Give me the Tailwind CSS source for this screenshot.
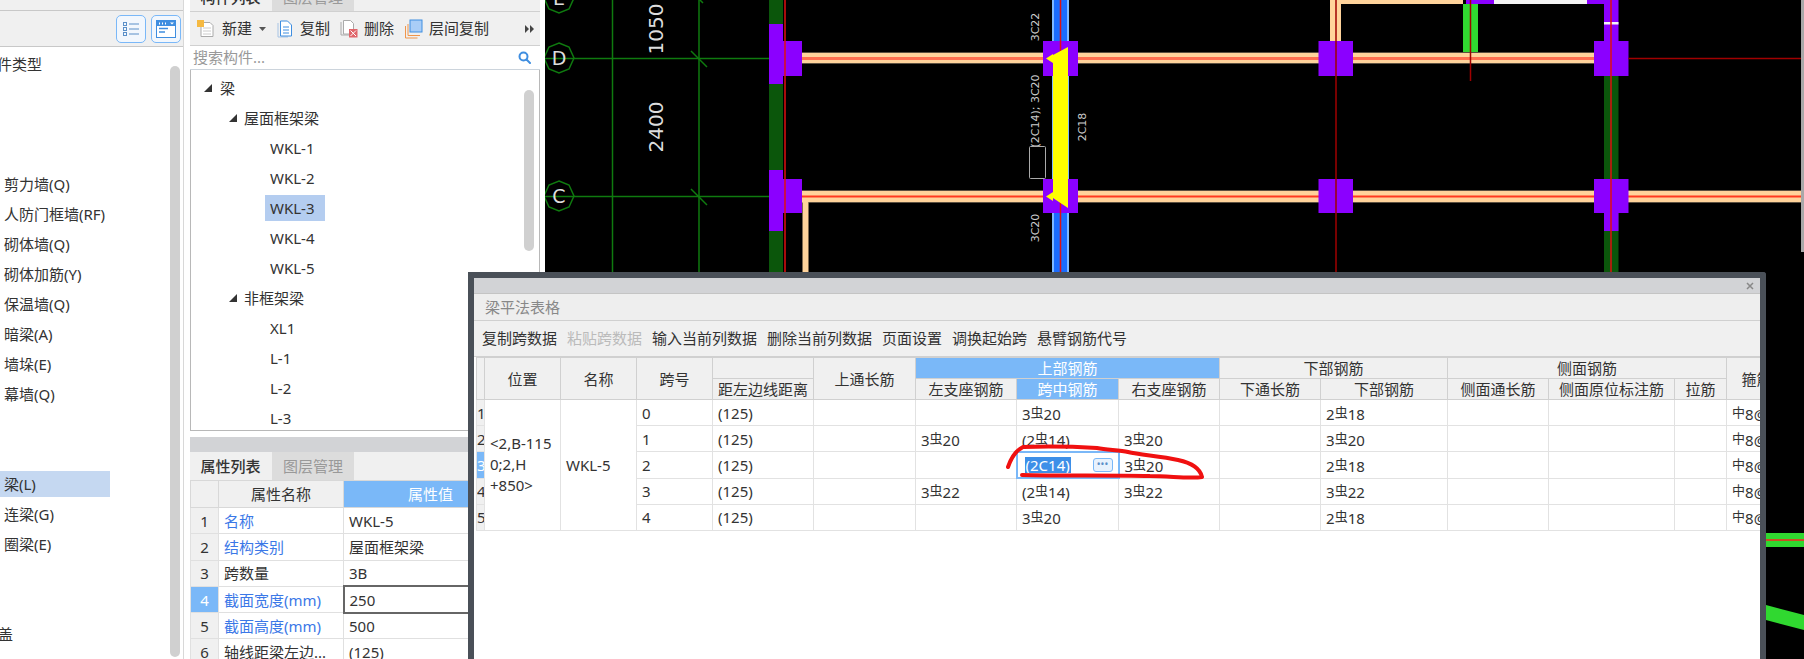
<!DOCTYPE html>
<html lang="zh-CN">
<head>
    <meta charset="UTF-8">
    <title>梁平法表格</title>
    <script src="https://cdn.jsdelivr.net/npm/@tailwindcss/browser@4"></script>
</head>
<body class="relative w-[1804px] h-[659px] overflow-hidden bg-white text-[15px] text-[#333] font-['Noto_Sans','Noto_Sans_CJK_SC',sans-serif]">

<div class="flex h-[659px]">
    <!-- Component type panel -->
    <div class="relative w-[190px] shrink-0 overflow-hidden">
        <div class="w-[184px] h-[10px] bg-[#f0f0f0]"></div>
        <div class="w-[184px] h-[37px] bg-[#f0f0f0] border-y border-[#c8c8c8] flex items-center justify-end gap-[5px] pr-[3px]">
            <div class="w-[30px] h-[28px] rounded-[5px] border border-[#7ab8f8] bg-[#f2f7fd] flex items-center justify-center">
                <svg width="18" height="16" viewBox="0 0 18 16" fill="none" stroke="#5a8fc8"><rect x="1.500" y="1.500" width="3" height="3"/><rect x="1.500" y="6.500" width="3" height="3"/><rect x="1.500" y="11.500" width="3" height="3"/><path d="M7 3h10M7 8h10M7 13h10"/></svg>
            </div>
            <div class="w-[30px] h-[28px] rounded-[5px] border border-[#7ab8f8] bg-[#f2f7fd] flex items-center justify-center">
                <svg width="20" height="18" viewBox="0 0 20 18"><rect width="20" height="18" fill="#3f8ee0"/><rect x="1" y="6" width="18" height="11" fill="#fff"/><path d="M3 2.500h1v2H3zM6 2.500h1v2H6zM9 2.500h1v2H9zM14 2.500h4l-2 2z" fill="#fff"/><path d="M3 8.500h9M3 12h6" stroke="#3f8ee0" stroke-width="1.500"/></svg>
            </div>
        </div>
        <div class="w-[170px] pt-[2px] pl-[4px] leading-[30px] whitespace-nowrap">
            <div class="h-[30px] ml-[-22px]">构件类型</div>
            <div class="h-[90px]"></div>
            <div class="h-[30px]">剪力墙(Q)</div>
            <div class="h-[30px]">人防门框墙(RF)</div>
            <div class="h-[30px]">砌体墙(Q)</div>
            <div class="h-[30px]">砌体加筋(Y)</div>
            <div class="h-[30px]">保温墙(Q)</div>
            <div class="h-[30px]">暗梁(A)</div>
            <div class="h-[30px]">墙垛(E)</div>
            <div class="h-[30px]">幕墙(Q)</div>
            <div class="h-[60px]"></div>
            <div class="h-[30px] flex items-center ml-[-4px]"><span class="w-[110px] h-[26px] leading-[26px] pl-[4px] bg-[#c5d8f1]">梁(L)</span></div>
            <div class="h-[30px]">连梁(G)</div>
            <div class="h-[30px]">圈梁(E)</div>
            <div class="h-[60px]"></div>
            <div class="h-[30px] ml-[-21px]">顶盖</div>
        </div>
        <div class="absolute left-[170px] top-[66px] w-[10px] h-[591px] rounded-[5px] bg-[#d0d0d0]"></div>
        <div class="absolute left-[183px] top-0 w-px h-[659px] bg-[#d8d8d8]"></div>
    </div>

    <!-- Component list and properties -->
    <div class="w-[350px] shrink-0 flex flex-col overflow-hidden">
        <div class="flex h-[28px] mt-[-17px] shrink-0 bg-[#f0f0f0] leading-[28px] text-center">
            <div class="w-[81px] font-medium">构件列表</div>
            <div class="w-[82px] ml-px bg-[#dcdcdc] text-[#999]">图层管理</div>
        </div>
        <div class="h-[35px] shrink-0 bg-[#f0f0f0] border-y border-[#d0d0d0] flex items-center whitespace-nowrap relative">
            <svg class="ml-[7px]" width="18" height="18" viewBox="0 0 18 18"><path d="M4 2.500h9l3 3v11H4z" fill="#fff" stroke="#aaa"/><path d="M6 8h8M6 11h8M6 14h8" stroke="#ccc"/><rect x="0" y="0" width="7" height="7" fill="#f5b942"/></svg>
            <span class="ml-[7px]">新建</span>
            <svg class="ml-[7px]" width="7" height="4" viewBox="0 0 7 4"><path d="M0 0h7L3.500 4z" fill="#555"/></svg>
            <svg class="ml-[11px]" width="16" height="18" viewBox="0 0 16 18" fill="none"><path d="M1 3v14h10" stroke="#a8c4e4"/><path d="M3.500 1h7l4 4v11h-11z" fill="#fff" stroke="#3f8ee0"/><path d="M6 7h6M6 10h6M6 13h6" stroke="#3f8ee0"/></svg>
            <span class="ml-[7px]">复制</span>
            <svg class="ml-[10px]" width="18" height="18" viewBox="0 0 18 18"><path d="M1 2v13h9" fill="none" stroke="#aaa"/><path d="M3.500 .500h7l3 3V14h-10z" fill="#fff" stroke="#aaa"/><rect x="9" y="9" width="8.500" height="8.500" fill="#e0656a"/><path d="M10.500 10.500l5.500 5.500M16 10.500L10.500 16" stroke="#fff"/></svg>
            <span class="ml-[6px]">删除</span>
            <svg class="ml-[11px]" width="18" height="20" viewBox="0 0 18 20" fill="none"><path d="M.5 7v12h12" stroke="#f0954a"/><path d="M3 5v11.500h12" stroke="#f0954a"/><rect x="5" y="1" width="12" height="12" fill="#a9cdf7" stroke="#3f8ee0"/></svg>
            <span class="ml-[6px]">层间复制</span>
            <svg class="absolute left-[335px] top-[13px]" width="10" height="8" viewBox="0 0 10 8"><path d="M0 0l4 4-4 4zM5 0l4 4-4 4z" fill="#444"/></svg>
        </div>
        <div class="h-[24px] shrink-0 border-b border-[#ccd4dc] flex items-center justify-between pl-[3px] pr-[9px] text-[#999]">
            <span>搜索构件...</span>
            <svg width="13" height="13" viewBox="0 0 13 13" fill="none" stroke="#3f8ee0" stroke-width="2"><circle cx="5.500" cy="5.500" r="4"/><path d="M8.500 8.500l3.500 3.500" stroke-linecap="round"/></svg>
        </div>
        <div class="relative h-[361px] shrink-0 overflow-hidden border-x border-b border-[#b8b8b8] pt-[3px] leading-[30px] whitespace-nowrap">
            <div class="h-[30px] flex items-center pl-[13px]"><svg width="8" height="8" viewBox="0 0 8 8"><path d="M8 0v8H0z" fill="#333"/></svg><span class="ml-[8px]">梁</span></div>
            <div class="h-[30px] flex items-center pl-[38px]"><svg width="8" height="8" viewBox="0 0 8 8"><path d="M8 0v8H0z" fill="#333"/></svg><span class="ml-[7px]">屋面框架梁</span></div>
            <div class="h-[30px] pl-[79px]">WKL-1</div>
            <div class="h-[30px] pl-[79px]">WKL-2</div>
            <div class="h-[30px] pl-[74px] flex items-center"><span class="w-[60px] h-[26px] leading-[26px] pl-[5px] bg-[#b4cdf0]">WKL-3</span></div>
            <div class="h-[30px] pl-[79px]">WKL-4</div>
            <div class="h-[30px] pl-[79px]">WKL-5</div>
            <div class="h-[30px] flex items-center pl-[38px]"><svg width="8" height="8" viewBox="0 0 8 8"><path d="M8 0v8H0z" fill="#333"/></svg><span class="ml-[7px]">非框架梁</span></div>
            <div class="h-[30px] pl-[79px]">XL1</div>
            <div class="h-[30px] pl-[79px]">L-1</div>
            <div class="h-[30px] pl-[79px]">L-2</div>
            <div class="h-[30px] pl-[79px]">L-3</div>
            <div class="absolute left-[333px] top-[20px] w-[10px] h-[161px] rounded-[5px] bg-[#d0d0d0]"></div>
        </div>
        <div class="h-[15px] mt-[6px] shrink-0 bg-[#d2d3d6]"></div>
        <div class="flex h-[28px] shrink-0 bg-[#f0f0f0] leading-[28px] text-center">
            <div class="w-[81px] font-medium">属性列表</div>
            <div class="w-[82px] ml-px bg-[#dcdcdc] text-[#999]">图层管理</div>
        </div>
        <table class="table-fixed border-collapse w-[350px] leading-[20px] [&_td]:h-[26.300px] [&_td]:border [&_td]:border-[#e0e0e0] [&_td]:pl-[5px] [&_td]:whitespace-nowrap [&_td]:overflow-hidden [&_th]:border [&_th]:border-[#d8d8d8] [&_th]:font-normal [&_th]:h-[27px]">
            <colgroup><col class="w-[28px]"><col class="w-[125px]"><col class="w-[197px]"></colgroup>
            <tr class="bg-[#f0f0f0]"><th></th><th>属性名称</th><th class="bg-[#7ab8f8] text-white pr-[23px]">属性值</th></tr>
            <tr><td class="bg-[#f0f0f0] text-center !pl-0">1</td><td class="text-[#3b78e7]">名称</td><td>WKL-5</td></tr>
            <tr><td class="bg-[#f0f0f0] text-center !pl-0">2</td><td class="text-[#3b78e7]">结构类别</td><td>屋面框架梁</td></tr>
            <tr><td class="bg-[#f0f0f0] text-center !pl-0">3</td><td>跨数量</td><td>3B</td></tr>
            <tr><td class="bg-[#7ab8f8] text-white text-center !pl-0">4</td><td class="text-[#3b78e7]">截面宽度(mm)</td><td class="!border-2 !border-[#666]">250</td></tr>
            <tr><td class="bg-[#f0f0f0] text-center !pl-0">5</td><td class="text-[#3b78e7]">截面高度(mm)</td><td>500</td></tr>
            <tr><td class="bg-[#f0f0f0] text-center !pl-0">6</td><td>轴线距梁左边...</td><td>(125)</td></tr>
        </table>
    </div>

    <div class="w-[5px] shrink-0"></div>

    <!-- CAD drawing, in page coordinates -->
    <div class="flex-1 bg-black">
        <svg width="1259" height="659" viewBox="545 0 1259 659" class="block">
            <!-- axis lines -->
            <g stroke="#0f7a0f" stroke-width="1.500" fill="none">
                <path d="M612.500 0V272M699 0V272M545 58.500H785M545 196.500H785"/>
                <path d="M691 51l16 16M691 189l16 16M695 -5l8 8"/>
                <polygon points="559,43 569,47 574,58 569,69 559,73 549,69 544,58 549,47"/>
                <polygon points="559,181 569,185 574,196 569,207 559,211 549,207 544,196 549,185"/>
                <polygon points="559,-17 569,-13 574,-2 569,9 559,13 549,9 544,-2 549,-13"/>
            </g>
            <g fill="#ddd" font-family="DejaVu Sans, sans-serif" text-anchor="middle">
                <text x="559" y="65" font-size="19">D</text>
                <text x="559" y="203" font-size="19">C</text>
                <text x="559" y="5" font-size="19">E</text>
                <text transform="translate(663 29) rotate(-90)" font-size="20">1050</text>
                <text transform="translate(663 127) rotate(-90)" font-size="20">2400</text>
            </g>
            <!-- walls -->
            <rect x="769" y="0" width="14" height="272" fill="#0b560b"/>
            <rect x="1604" y="76" width="14.500" height="196" fill="#0b560b"/>
            <rect x="1463" y="4" width="15" height="54" fill="#30d830"/>
            <!-- beams -->
            <g fill="#ffd39b">
                <rect x="802" y="52" width="241" height="12"/>
                <rect x="1078" y="52" width="516" height="12"/>
                <rect x="802" y="190.500" width="241" height="12"/>
                <rect x="1078" y="190.500" width="723" height="12"/>
                <rect x="802.500" y="202" width="6" height="70"/>
                <rect x="1330" y="0" width="11" height="41"/>
                <rect x="1341" y="0" width="122" height="4"/>
            </g>
            <path d="M802 52.500H1594M802 63.500H1594M802 190.500H1801M808.500 202.500H1043M1078 202.500H1801" stroke="#5c5040" fill="none"/>
            <path d="M802 58.500H1594" stroke="#ff7050" stroke-width="3"/>
            <path d="M802 196.500H1801" stroke="#ff3a20" stroke-width="2"/>
            <!-- vertical blue beam -->
            <rect x="1052" y="0" width="17" height="272" fill="#7fb8ff"/>
            <rect x="1054" y="0" width="13" height="272" fill="#1a6cff"/>
            <!-- columns -->
            <g fill="#8b00ff">
                <rect x="769" y="24" width="14" height="60"/><rect x="783" y="41" width="19" height="35"/>
                <rect x="769" y="170" width="14" height="61"/><rect x="783" y="179" width="19" height="34"/>
                <rect x="1043" y="41" width="35" height="35"/><rect x="1043" y="179" width="35" height="34"/>
                <rect x="1318.500" y="41" width="34.500" height="35"/><rect x="1318.500" y="179" width="34.500" height="34"/>
                <rect x="1594" y="41" width="34.500" height="35"/><rect x="1594" y="179" width="34.500" height="34"/>
                <rect x="1604" y="0" width="14.500" height="41"/><rect x="1604" y="213" width="14.500" height="18"/>
                <rect x="1466" y="0" width="28" height="4"/><rect x="1587" y="0" width="31" height="4"/>
            </g>
            <rect x="1494" y="0" width="93" height="4" fill="#f4f4f4"/>
            <rect x="1604" y="22" width="14.500" height="2.500" fill="#f4f4f4"/>
            <!-- red axis lines -->
            <path d="M785 0V272M1611 0V272M1060.500 0V272" stroke="#e01010" stroke-width="1.500"/>
            <path d="M1336 0V272M1470.500 0V81M1628.500 58.500H1801" stroke="#a00000" stroke-width="1.500"/>
            <!-- yellow moment shape -->
            <path d="M1068 47V208L1053 198V55Z M1046 58.500L1053 54V63Z M1046 196.500L1053 192V201Z" fill="#ffff00"/>
            <!-- rebar labels -->
            <g fill="#ccc" font-family="DejaVu Sans, sans-serif" font-size="11" text-anchor="middle">
                <text transform="translate(1039 27) rotate(-90)">3C22</text>
                <text transform="translate(1039 111) rotate(-90)">(2C14); 3C20</text>
                <text transform="translate(1039 228) rotate(-90)">3C20</text>
                <text transform="translate(1086 127) rotate(-90)">2C18</text>
            </g>
            <rect x="1029.500" y="146.500" width="16" height="32" rx="1" fill="#000" stroke="#aaa"/>
            <!-- right edge and lower right -->
            <rect x="1801" y="0" width="3" height="252" fill="#a8a8a8"/>
            <rect x="1766" y="533" width="38" height="14" fill="#30d830"/>
            <path d="M1766 540H1804" stroke="#ff2020" stroke-width="1.500"/>
            <path d="M1766 605L1804 615V630L1766 620Z" fill="#30d830"/>
        </svg>
    </div>
</div>

<!-- Beam table dialog -->
<div class="absolute left-[468px] top-[272px] w-[1298px] h-[387px] rounded-tr-[3px] border-x-[6px] border-t-[6px] border-[#4a5058] bg-white overflow-hidden flex flex-col">
    <div class="h-[16px] shrink-0 bg-[#d2d3d6] border-b border-[#c4c4c4] flex items-center justify-end pr-[6px]">
        <svg width="8" height="8" viewBox="0 0 8 8" stroke="#888" stroke-width="1.500"><path d="M1 1l6 6M7 1L1 7"/></svg>
    </div>
    <div class="h-[27px] shrink-0 bg-[#eee] border-b border-[#d0d0d0] pl-[11px] leading-[26px] text-[#888]">梁平法表格</div>
    <div class="h-[36px] shrink-0 bg-[#f0f0f0] border-b border-[#d0d0d0] pl-[8px] flex items-center gap-[10px] whitespace-nowrap">
        <span>复制跨数据</span>
        <span class="text-[#bbb]">粘贴跨数据</span>
        <span>输入当前列数据</span>
        <span>删除当前列数据</span>
        <span>页面设置</span>
        <span>调换起始跨</span>
        <span>悬臂钢筋代号</span>
    </div>
    <div class="pl-[2px] bg-white">
        <table class="table-fixed border-collapse w-[1310px] whitespace-nowrap leading-[20px] [&_th]:h-[21px] [&_th]:p-0 [&_th]:font-normal [&_th]:border [&_th]:border-[#d0d0d0] [&_th]:bg-[#f0f0f0] [&_td]:h-[26.200px] [&_td]:p-0 [&_td]:pl-[5px] [&_td]:border [&_td]:border-[#e2e2e2] [&_td]:overflow-hidden">
            <colgroup>
                <col class="w-[8px]"><col class="w-[76px]"><col class="w-[76px]"><col class="w-[76px]"><col class="w-[101px]"><col class="w-[102px]"><col class="w-[101px]"><col class="w-[102px]"><col class="w-[101px]"><col class="w-[101px]"><col class="w-[127px]"><col class="w-[101px]"><col class="w-[126px]"><col class="w-[52px]"><col class="w-[60px]">
            </colgroup>
            <tr>
                <th rowspan="2"></th>
                <th rowspan="2">位置</th>
                <th rowspan="2">名称</th>
                <th rowspan="2">跨号</th>
                <th></th>
                <th rowspan="2">上通长筋</th>
                <th colspan="3" class="!bg-[#7ab8f8] text-white">上部钢筋</th>
                <th colspan="2">下部钢筋</th>
                <th colspan="3">侧面钢筋</th>
                <th rowspan="2">箍筋</th>
            </tr>
            <tr>
                <th>距左边线距离</th>
                <th>左支座钢筋</th>
                <th class="!bg-[#7ab8f8] text-white">跨中钢筋</th>
                <th>右支座钢筋</th>
                <th>下通长筋</th>
                <th>下部钢筋</th>
                <th>侧面通长筋</th>
                <th>侧面原位标注筋</th>
                <th>拉筋</th>
            </tr>
            <tr>
                <td class="!pl-0 bg-[#f0f0f0]">1</td>
                <td rowspan="5" class="leading-[21px]">&lt;2,B-115<br>0;2,H<br>+850&gt;</td>
                <td rowspan="5">WKL-5</td>
                <td>0</td><td>(125)</td><td></td><td></td>
                <td>3<span class="text-[13px] align-[3px]">虫</span>20</td>
                <td></td><td></td>
                <td>2<span class="text-[13px] align-[3px]">虫</span>18</td>
                <td></td><td></td><td></td>
                <td><span class="text-[13px] align-[3px]">中</span>8@100/200</td>
            </tr>
            <tr>
                <td class="!pl-0 bg-[#f0f0f0]">2</td>
                <td>1</td><td>(125)</td><td></td>
                <td>3<span class="text-[13px] align-[3px]">虫</span>20</td>
                <td>(2<span class="text-[13px] align-[3px]">虫</span>14)</td>
                <td>3<span class="text-[13px] align-[3px]">虫</span>20</td>
                <td></td>
                <td>3<span class="text-[13px] align-[3px]">虫</span>20</td>
                <td></td><td></td><td></td>
                <td><span class="text-[13px] align-[3px]">中</span>8@100/200</td>
            </tr>
            <tr>
                <td class="!pl-0 bg-[#7ab8f8] text-white">3</td>
                <td>2</td><td>(125)</td><td></td><td></td>
                <td class="relative !border-2 !border-[#7ab8f8] !pl-[7px]">
                    <div class="flex items-center justify-between pr-[5px]">
                        <span class="bg-[#3d8fe8] text-white leading-[16px] px-px">(2C14)</span>
                        <span class="w-[20px] h-[14px] rounded-[3px] border border-[#7ab8f8] bg-[#e8f2fd] text-[#5a8fc8] text-[10px] leading-[10px] text-center">•••</span>
                    </div>
                </td>
                <td>3<span class="text-[13px] align-[3px]">虫</span>20</td>
                <td></td>
                <td>2<span class="text-[13px] align-[3px]">虫</span>18</td>
                <td></td><td></td><td></td>
                <td><span class="text-[13px] align-[3px]">中</span>8@100/200</td>
            </tr>
            <tr>
                <td class="!pl-0 bg-[#f0f0f0]">4</td>
                <td>3</td><td>(125)</td><td></td>
                <td>3<span class="text-[13px] align-[3px]">虫</span>22</td>
                <td>(2<span class="text-[13px] align-[3px]">虫</span>14)</td>
                <td>3<span class="text-[13px] align-[3px]">虫</span>22</td>
                <td></td>
                <td>3<span class="text-[13px] align-[3px]">虫</span>22</td>
                <td></td><td></td><td></td>
                <td><span class="text-[13px] align-[3px]">中</span>8@100/200</td>
            </tr>
            <tr>
                <td class="!pl-0 bg-[#f0f0f0]">5</td>
                <td>4</td><td>(125)</td><td></td><td></td>
                <td>3<span class="text-[13px] align-[3px]">虫</span>20</td>
                <td></td><td></td>
                <td>2<span class="text-[13px] align-[3px]">虫</span>18</td>
                <td></td><td></td><td></td>
                <td><span class="text-[13px] align-[3px]">中</span>8@100/200</td>
            </tr>
        </table>
    </div>
</div>

<!-- Red hand-drawn annotation -->
<svg class="absolute left-0 top-0 pointer-events-none" width="1804" height="659" viewBox="0 0 1804 659" fill="none">
    <path d="M1008 467C1011 458 1015 451 1023 447C1050 446 1080 447 1097 448C1108 450 1120 450 1128 452C1140 455 1160 456 1178 460C1192 463 1200 468 1202 477C1190 479 1170 476 1150 476C1110 475 1060 476 1022 475" stroke="#f01010" stroke-width="4" stroke-linecap="round" stroke-linejoin="round"/>
</svg>

</body>
</html>
